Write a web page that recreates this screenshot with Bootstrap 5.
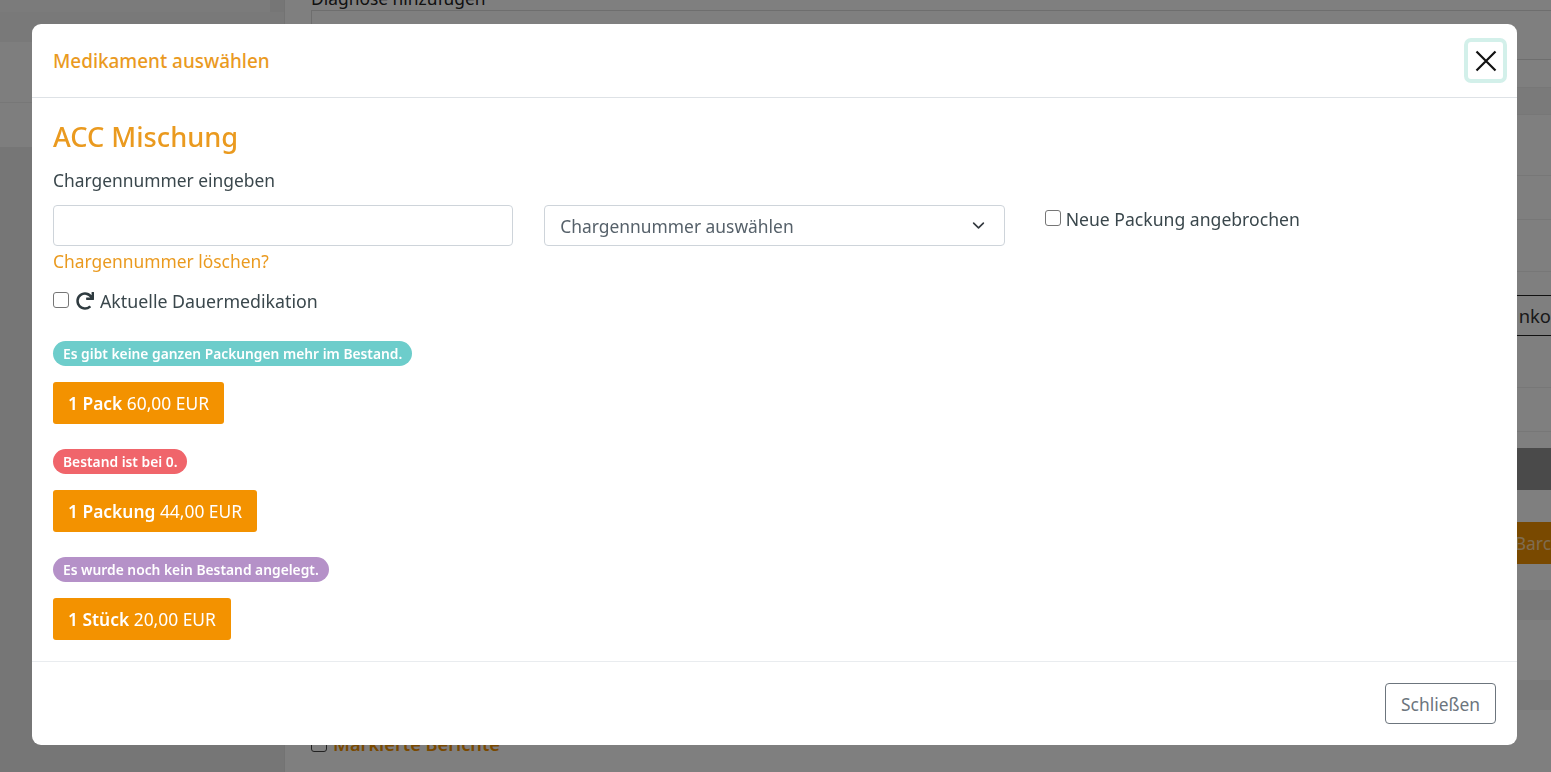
<!DOCTYPE html>
<html lang="de">
<head>
<meta charset="utf-8">
<title>Medikament auswählen</title>
<link href="https://cdn.jsdelivr.net/npm/bootstrap@5.3.0/dist/css/bootstrap.min.css" rel="stylesheet">
<style>
html,body{height:100%;overflow:hidden}
body{font-family:"Noto Sans",sans-serif;font-size:17.4px;color:#3a474c;background:#fff}
.page-shell{height:772px;overflow:hidden}
.side-col{width:285px;flex:none;background:#ececec;border-right:1px solid #e6e6e6}
.side-top{height:12px;width:270px;background:#f6f6f6}
.side-gap{height:30px;background:#f2f2f2}
.side-row{height:61px;background:#fdfdfd;border-bottom:1px solid #eee}
.side-row2{height:44px;background:#fdfdfd}
.main-col{flex:1;min-width:0;padding-left:26px;margin-top:-14px}
.main-label{height:24px;line-height:24px;color:#222}
.main-input{height:50px;border:1px solid #ddd;border-right:0}
.strip{border-bottom:1px solid #eee}
.strip-h28{height:28px}.strip-h27{height:27px;background:#f4f4f4}
.strip-h61{height:61px}.strip-h44{height:44px}.strip-h52{height:52px}.strip-h23{height:23px}
.strip-dark{height:42px;background:#959595;margin-left:-26px}
.ghost-btn{height:41px;border-top:1px solid #222;border-bottom:1px solid #222;display:flex;justify-content:flex-end;align-items:center;color:#333;font-size:18.4px;white-space:nowrap}
.strip-gap32{height:32px}.strip-gap26{height:26px}.strip-gap22{height:22px}.strip-gap16{height:16px}.strip-gap60{height:60px}
.ghost-orange{height:42px;background:#f39200;color:#ffd9a0;display:flex;justify-content:flex-end;align-items:center;overflow:hidden;white-space:nowrap}
.ghost-band{background:#f3f3f3;height:30px}
.ghost-mark{color:#f39200;font-weight:600;font-size:18.2px;line-height:24px;display:flex;align-items:center;gap:6px}
.ghost-mark i{display:block;width:16px;height:16px;border:1px solid #444;border-radius:3px}
.shot-dialog{width:1485px;height:721px;margin:24px 0 0 32px;max-width:none}
.shot-dialog .modal-content{height:721px;border:0;border-radius:9px;background:#fff}
.shot-dialog .modal-header{height:74px;padding:0 10px 0 21px;border-bottom:1px solid #dee2e6;flex:none}
.title-txt{font-size:18.9px;font-weight:500;color:#ea9a1f;margin:2px 0 0;line-height:1.2}
.close-x{width:43px;height:45px;padding:0;border:4px solid #d3f0ea;border-radius:7px;background:#fff;display:flex;align-items:center;justify-content:center}
.shot-dialog .modal-body{padding:21px 21px 0;flex:1}
.drug-head{font-size:27.2px;font-weight:500;color:#ea9a1f;margin:0 0 14px;line-height:36px}
.plain-label{line-height:24px;margin-bottom:13px;margin-top:-1px}
.charge-row{--bs-gutter-x:31px}
.charge-input{height:41px;border-color:#ced4da;border-radius:4px}
.charge-select{height:41px;border-color:#ced4da;border-radius:4px;font-size:17.4px;color:#56616a;padding:2px 16px 0 15px;background-position:right 17px center;background-size:17px 13px}
.ck-box{width:16px;height:16px;flex:none;border:1px solid #767676;border-radius:3px;background:#fff;margin:0;appearance:none}
.new-pack{margin-left:9px;display:flex;gap:5px;line-height:24px;padding-top:2px;font-size:17.6px}
.new-pack .ck-box{margin-top:3px}
.del-link{display:block;color:#ea9a1f;line-height:24px;text-decoration:none;margin-top:3px}
.long-med{display:flex;align-items:center;gap:6px;line-height:24px;margin:15px 0 27px;height:26px;font-size:17.8px}
.long-med .ck-box{margin-top:-3px;margin-right:1px}
.long-med svg{flex:none}
.stock-item{margin-bottom:25.5px}
.stock-item:last-child{margin-bottom:0}
.stock-pill{display:block;width:max-content;height:25px;line-height:25px;padding:0 10px;border-radius:13px;color:#fff;font-weight:600;font-size:13.8px;white-space:nowrap}
.pill-teal{background:#6dcdcb}.pill-red{background:#f0656b}.pill-purple{background:#b591c8}
.buy-btn{display:block;width:max-content;height:41.5px;margin-top:16px;padding:1px 15px 0;line-height:40px;background:#f39200;border:0;border-radius:3px;color:#fff;font-size:17.4px;white-space:nowrap}
.buy-btn b{font-weight:600}
.shot-dialog .modal-footer{height:84px;padding:0 21px;border-top:1px solid #e9ecef;flex:none}
.shut-btn{width:111px;height:41px;padding:1px 0 0;margin:0;border:1px solid #6c757d;border-radius:4px;background:#fff;color:#6c757d;font-size:17.4px}
</style>
</head>
<body>
<div class="page-shell d-flex">
  <aside class="side-col">
    <div class="side-top"></div>
    <div class="side-gap"></div>
    <div class="side-row"></div>
    <div class="side-row2"></div>
  </aside>
  <main class="main-col">
    <div class="main-label">Diagnose hinzufügen</div>
    <div class="main-input"></div>
    <div class="strip strip-h28"></div>
    <div class="strip strip-h27"></div>
    <div class="strip strip-h61"></div>
    <div class="strip strip-h44"></div>
    <div class="strip strip-h52"></div>
    <div class="strip-h23"></div>
    <div class="ghost-btn"><span>nko</span></div>
    <div class="strip strip-h52"></div>
    <div class="strip strip-h44"></div>
    <div class="strip-gap16"></div>
    <div class="strip-dark"></div>
    <div class="strip-gap32"></div>
    <div class="ghost-orange"><span>Barc</span></div>
    <div class="strip-gap26"></div>
    <div class="ghost-band"></div>
    <div class="strip-gap60"></div>
    <div class="ghost-band"></div>
    <div class="strip-gap22"></div>
    <div class="ghost-mark"><i></i>Markierte Berichte</div>
  </main>
</div>
<div class="modal-backdrop show"></div>
<div class="modal d-block" tabindex="-1">
<div class="modal-dialog shot-dialog">
  <div class="modal-content">
    <div class="modal-header d-flex align-items-center justify-content-between">
      <h5 class="title-txt">Medikament auswählen</h5>
      <button type="button" class="close-x" aria-label="Close">
        <svg width="22" height="22" viewBox="0 0 22 22" aria-hidden="true"><path d="M1.5 1.5 20.5 20.5M20.5 1.5 1.5 20.5" stroke="#111" stroke-width="2.2" fill="none"/></svg>
      </button>
    </div>
    <div class="modal-body">
      <h4 class="drug-head">ACC Mischung</h4>
      <div class="plain-label">Chargennummer eingeben</div>
      <div class="row charge-row">
        <div class="col-4">
          <input type="text" class="form-control charge-input">
          <a href="#" class="del-link">Chargennummer löschen?</a>
        </div>
        <div class="col-4">
          <select class="form-select charge-select"><option>Chargennummer auswählen</option></select>
        </div>
        <div class="col-4">
          <label class="new-pack"><input type="checkbox" class="ck-box">Neue Packung angebrochen</label>
        </div>
      </div>
      <label class="long-med">
        <input type="checkbox" class="ck-box">
        <svg width="18" height="18" viewBox="0 0 512 512" aria-hidden="true"><path fill="#2f3b40" d="M500.33 0h-47.41a12 12 0 0 0-12 12.57l4 82.76A247.42 247.42 0 0 0 256 8C119.34 8 8.05 119.53 8 256.19 7.95 393.07 119.21 504 256 504a247.1 247.1 0 0 0 166.18-63.91 12 12 0 0 0 .48-17.43l-34-34a12 12 0 0 0-16.38-.55A176 176 0 1 1 402.1 157.8l-101.53-4.87a12 12 0 0 0-12.57 12v47.41a12 12 0 0 0 12 12h200.33a12 12 0 0 0 12-12V12a12 12 0 0 0-12-12z"/></svg>
        Aktuelle Dauermedikation
      </label>
      <div class="stock-item">
        <span class="stock-pill pill-teal">Es gibt keine ganzen Packungen mehr im Bestand.</span>
        <button type="button" class="buy-btn"><b>1 Pack</b> 60,00 EUR</button>
      </div>
      <div class="stock-item">
        <span class="stock-pill pill-red">Bestand ist bei 0.</span>
        <button type="button" class="buy-btn"><b>1 Packung</b> 44,00 EUR</button>
      </div>
      <div class="stock-item">
        <span class="stock-pill pill-purple">Es wurde noch kein Bestand angelegt.</span>
        <button type="button" class="buy-btn"><b>1 Stück</b> 20,00 EUR</button>
      </div>
    </div>
    <div class="modal-footer">
      <button type="button" class="shut-btn">Schließen</button>
    </div>
  </div>
</div>
</div>
<script src="https://cdn.jsdelivr.net/npm/bootstrap@5.3.0/dist/js/bootstrap.bundle.min.js"></script>
</body>
</html>
